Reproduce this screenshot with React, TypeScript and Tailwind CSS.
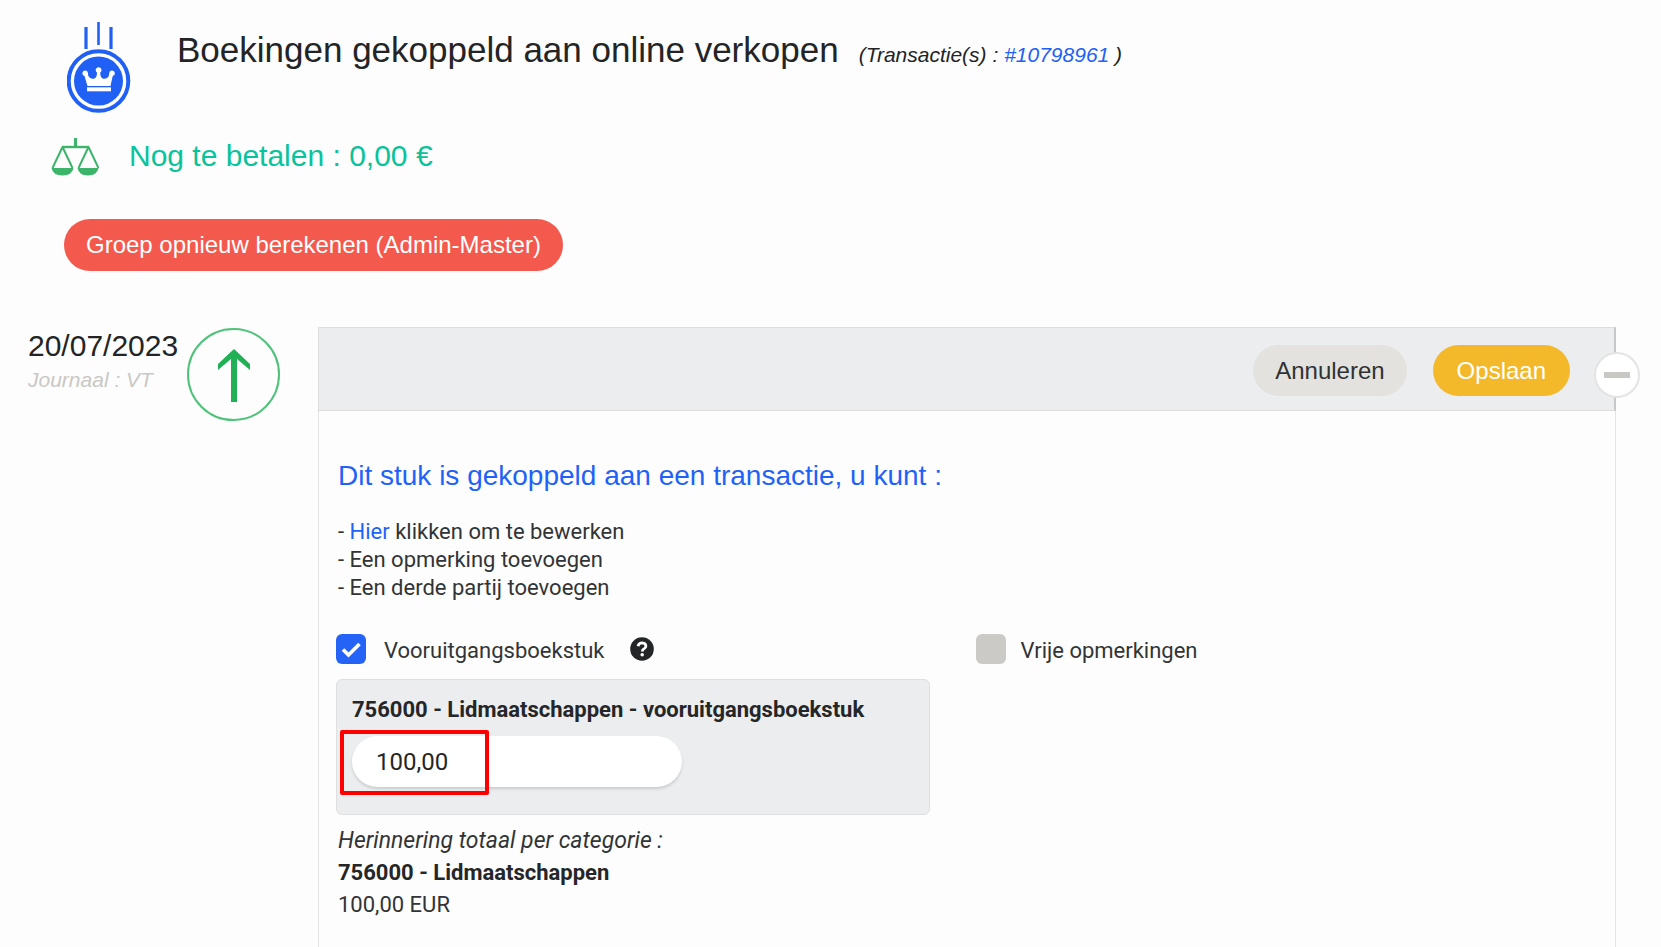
import { useState } from "react";
import type { ReactNode } from "react";
import clsx from "clsx";

const arial = "font-['Liberation_Sans',Arial,sans-serif]";
const roboto = "font-[Roboto,sans-serif]";

function CoinIcon() {
  return (
    <svg viewBox="0 0 64 92" className="h-[92px] w-16 shrink-0" aria-hidden="true">
      <g stroke="#2160f5" strokeWidth="2.6">
        <path d="M19 5v22M44 5v22" strokeWidth="3.2" />
        <path d="M31.5 0v23" />
      </g>
      <circle cx="31.5" cy="59" r="29.8" fill="#fff" stroke="#2160f5" strokeWidth="4" />
      <circle cx="31.5" cy="59" r="24.5" fill="#2160f5" />
      <g fill="#fff">
        <path d="M20.5 64 17.5 54a2.800 2.800 0 1 1 3.400-3.200l.3 2.700q2 4 5.800 3.200 3-1 3-6.200a2.900 2.900 0 1 1 3.200 0q0 5.200 3 6.200 3.800.8 5.800-3.200l.3-2.700a2.800 2.800 0 1 1 3.400 3.200L43.500 64Z" />
        <path d="M20 65.300h24v4H20z" />
      </g>
    </svg>
  );
}

function ScalesIcon() {
  return (
    <svg viewBox="0 0 48 38" className="h-[38px] w-12 shrink-0" fill="none" stroke="#3cb56a" aria-hidden="true">
      <path d="M24.5 0v9" strokeWidth="3" />
      <path d="M11 9h27" strokeWidth="2.4" />
      <path d="M11.5 9 1.500 30M11.500 9l10 21M37.500 9l-10 21M37.500 9l10 21" strokeWidth="2" />
      <path d="M.5 30h22q-1.500 7.500-11 7.500T.5 30ZM26.500 30h21q-1.500 7.500-10.500 7.500T26.500 30Z" fill="#3cb56a" stroke="none" />
    </svg>
  );
}

type CheckProps = {
  label: string;
  checked: boolean;
  onChange: (checked: boolean) => void;
  gap: string;
  children?: ReactNode;
};

function Check({ label, checked, onChange, gap, children }: CheckProps) {
  return (
    <div className="flex items-center">
      <label className={clsx("flex cursor-pointer items-center", gap)}>
        <span className="relative size-[30px]">
          <input
            type="checkbox"
            checked={checked}
            onChange={(e) => onChange(e.target.checked)}
            className="block size-[30px] appearance-none rounded-md bg-[#cbcac6] checked:bg-[#2563f6]"
          />
          {checked && (
            <svg viewBox="0 0 30 30" className="pointer-events-none absolute inset-0" fill="none" aria-hidden="true">
              <path d="M7 15.5l5.500 5.500L23.500 10" stroke="#fff" strokeWidth="3.6" />
            </svg>
          )}
        </span>
        <span className="pt-1">{label}</span>
      </label>
      {children}
    </div>
  );
}

export default function App() {
  const [open, setOpen] = useState(true);
  const [progress, setProgress] = useState(true);
  const [remarks, setRemarks] = useState(false);
  const [amount, setAmount] = useState("100,00");

  return (
    <main className={clsx("h-screen overflow-hidden bg-[#fdfdfd] text-[#222426]", arial)}>
      <header className="flex items-start pt-[22px] pl-[67px]">
        <CoinIcon />
        <div className="ml-[46px] flex items-baseline gap-5 pt-2">
          <h1 className="text-[35px] leading-10">Boekingen gekoppeld aan online verkopen</h1>
          <p className="text-[21px] italic">
            (Transactie(s) :{" "}
            <a href="#10798961" className="text-[#2160f5]">
              #10798961
            </a>{" "}
            )
          </p>
        </div>
      </header>

      <div className="mt-6 flex items-center gap-[30px] pl-[51px] text-[30px] leading-9 text-[#08c39b]">
        <ScalesIcon />
        <p className="pb-[2px]">Nog te betalen : 0,00 €</p>
      </div>

      <button type="button" className="mt-[43px] ml-16 h-[52px] rounded-full bg-[#f3594c] px-[22px] text-2xl text-white">
        Groep opnieuw berekenen (Admin-Master)
      </button>

      <div className="mt-14 flex pr-[45px] pl-7">
        <div className="w-[159px] shrink-0">
          <p className="text-[30px] leading-[38px]">20/07/2023</p>
          <p className="text-[21px] leading-[30px] text-[#c9c8c5] italic">Journaal : VT</p>
        </div>
        <div className="mt-px mr-[38px] flex size-[93px] shrink-0 items-center justify-center rounded-full border-2 border-[#4fc27a] pt-[2px]">
          <svg viewBox="0 0 34 54" className="h-[54px] w-[34px]" aria-hidden="true">
            <path d="M17 0 33 15v6L20 10v43h-6V10L1 21v-6Z" fill="#20b055" />
          </svg>
        </div>

        <section className="min-w-0 flex-1">
          <div className="relative flex h-[84px] items-center justify-end gap-[26px] border border-r-2 border-[#dddddb] border-r-[#c6c7c8] bg-[#ecedef] pt-[3px] pr-11 text-2xl">
            <button type="button" className="h-[51px] rounded-full bg-[#e3e2df] px-[22px] text-[#303234]">
              Annuleren
            </button>
            <button type="button" className="h-[51px] rounded-full bg-[#f3b92b] px-6 text-white">
              Opslaan
            </button>
            <button
              type="button"
              aria-label="Inklappen"
              aria-expanded={open}
              onClick={() => setOpen(!open)}
              className="absolute top-6 -right-[26px] flex size-[46px] items-center justify-center rounded-full border-2 border-[#e5e4e3] bg-white"
            >
              <span className="h-[6px] w-[26px] bg-[#c9c8c4]" />
            </button>
          </div>

          {open && (
            <div className={clsx("h-[600px] border-x border-[#e4e4e4] pt-[47px] pl-[17px] text-[22px] text-[#323436]", roboto)}>
              <div className="pl-[2px]">
                <h2 className={clsx("text-[28px] leading-9 text-[#1f62f8]", arial)}>
                  Dit stuk is gekoppeld aan een transactie, u kunt :
                </h2>
                <ul className="mt-6 leading-7">
                  <li>
                    - <a href="#bewerken" className="text-[#1f62f8]">Hier</a> klikken om te bewerken
                  </li>
                  <li>- Een opmerking toevoegen</li>
                  <li>- Een derde partij toevoegen</li>
                </ul>
              </div>

              <div className="mt-7 grid grid-cols-2">
                <div>
                  <Check label="Vooruitgangsboekstuk" checked={progress} onChange={setProgress} gap="gap-[18px]">
                    <button type="button" aria-label="Help" className="ml-[26px]">
                      <svg viewBox="0 0 24 24" className="size-6" aria-hidden="true">
                        <circle cx="12" cy="12" r="11.8" fill="#242527" />
                        <path d="M8 9.200q.7-3.400 4.200-3.400 3.600.2 3.700 3.200 0 1.700-2 2.900-1.600.9-1.600 2.500" fill="none" stroke="#fff" strokeWidth="2.8" />
                        <circle cx="12.2" cy="17.8" r="1.8" fill="#fff" />
                      </svg>
                    </button>
                  </Check>

                  {progress && (
                    <div className="mt-3 mr-[46px] rounded-md border border-[#dfdfdf] bg-[#ecedef] px-[15px] pt-[14px] pb-[27px]">
                      <label htmlFor="amount" className="block leading-8 font-bold text-[#242628]">
                        756000 - Lidmaatschappen - vooruitgangsboekstuk
                      </label>
                      <div className="relative mt-[10px] w-[330px]">
                        <input
                          id="amount"
                          type="text"
                          value={amount}
                          onChange={(e) => setAmount(e.target.value)}
                          className="block h-[51px] w-full rounded-full bg-white px-6 text-2xl text-[#242628] shadow-[0_2px_3px_rgba(0,0,0,0.14)] outline-none"
                        />
                        <div className="pointer-events-none absolute -top-[6px] -left-3 h-[65px] w-[149px] rounded-xs border-4 border-[#fe0000]" />
                      </div>
                    </div>
                  )}

                  <div className="mt-[10px] pl-[2px] leading-8">
                    <p className="text-[23px] italic">Herinnering totaal per categorie :</p>
                    <p className="font-bold text-[#242628]">756000 - Lidmaatschappen</p>
                    <p>100,00 EUR</p>
                  </div>
                </div>

                <div>
                  <Check label="Vrije opmerkingen" checked={remarks} onChange={setRemarks} gap="gap-[15px]" />
                </div>
              </div>
            </div>
          )}
        </section>
      </div>
    </main>
  );
}
